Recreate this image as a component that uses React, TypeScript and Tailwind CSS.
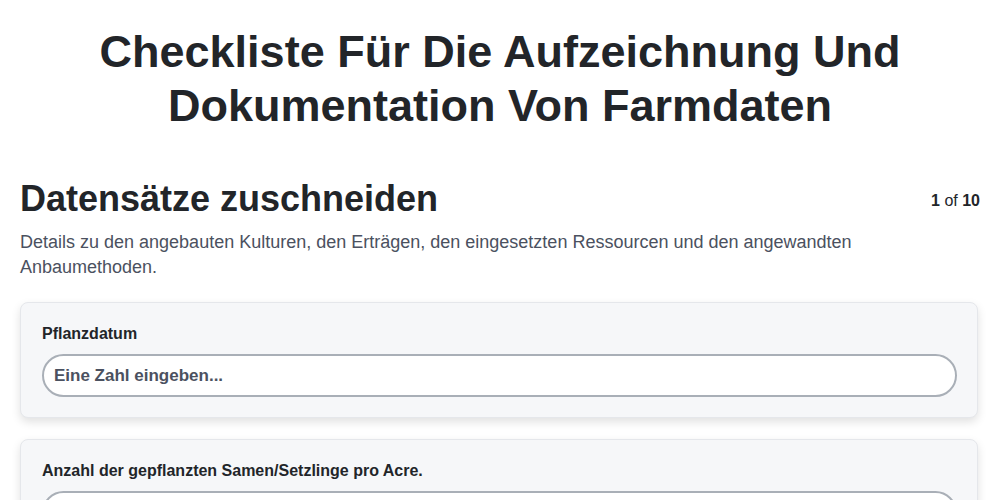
export default function App() {
  const fields = [
    { label: "Pflanzdatum", placeholder: "Eine Zahl eingeben..." },
    { label: "Anzahl der gepflanzten Samen/Setzlinge pro Acre.", placeholder: "Eine Zahl eingeben..." },
  ];

  return (
    <div
      className="min-h-screen bg-white text-[#222529]"
      style={{ fontFamily: '"Liberation Sans", Arial, sans-serif' }}
    >
      <h1 className="pt-[25px] px-10 text-center text-[45px] leading-[54px] font-bold">
        Checkliste Für Die Aufzeichnung Und
        <br />
        Dokumentation Von Farmdaten
      </h1>

      <div className="px-5 mt-[46px]">
        <div className="flex items-start justify-between">
          <h2 className="text-[36px] leading-[40px] font-bold">Datensätze zuschneiden</h2>
          <div className="text-base mt-[10px] text-[#222529]">
            <span className="font-bold">1</span> of <span className="font-bold">10</span>
          </div>
        </div>
        <p className="mt-[11px] text-lg leading-[25px] text-[#4b5160] pr-[100px]">
          Details zu den angebauten Kulturen, den Erträgen, den eingesetzten Ressourcen und den angewandten
          Anbaumethoden.
        </p>

        <div className="mt-[22px] flex flex-col gap-[21px] pr-[2px]">
          {fields.map((f) => (
            <div
              key={f.label}
              className="bg-[#f6f7f9] border border-[#e5e7eb] rounded-lg pl-[21px] pr-5 pt-[21px] pb-5 shadow-[0_4px_10px_rgba(0,0,0,0.12)]"
            >
              <label className="block text-base leading-5 font-bold text-[#222529] mb-[10px]">
                {f.label}
              </label>
              <input
                type="text"
                placeholder={f.placeholder}
                className="w-full h-[43px] rounded-full border-2 border-[#a9afb7] bg-white px-[10px] text-[17px] font-bold text-[#4b5160] placeholder:text-[#4b5160] outline-none"
              />
            </div>
          ))}
        </div>
      </div>
    </div>
  );
}
